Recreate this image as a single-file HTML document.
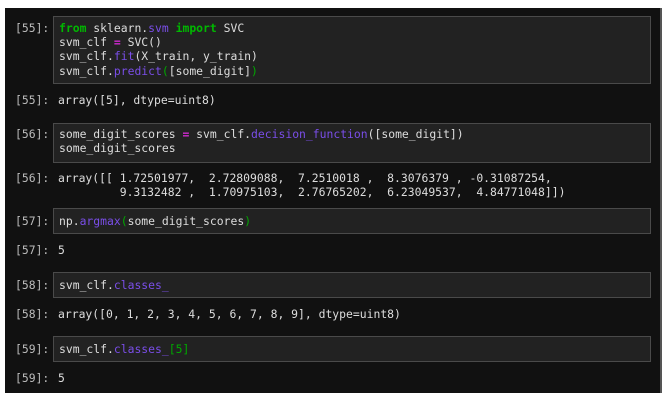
<!DOCTYPE html>
<html><head><meta charset="utf-8"><style>
body{margin:0;width:671px;height:404px;background:#fff;overflow:hidden;position:relative;font-family:"DejaVu Sans Mono","Liberation Mono",monospace;font-size:11.4px;color:#ddd}
#p{position:absolute;left:5px;top:8px;width:655px;height:385px;background:#111;border-right:2px solid #555}
.b{position:absolute;left:53px;width:596px;background:#222;border:1px solid #4a4a4a}
.t{position:absolute;white-space:pre;line-height:14.2px;color:#ddd}
.l{position:absolute;left:15px;white-space:pre;color:#bbb}
.k{color:#00b800;font-weight:bold}.f{color:#7a4ee8}.o{color:#d02ad0;font-weight:bold}.g{color:#00a800}
</style></head><body>
<div id="p"></div>
<div class="b" style="top:16px;height:66px"></div>
<div class="l" style="top:21px">[55]:</div>
<div class="t" style="left:59px;top:21px"><span class="k">from</span> sklearn.<span class="f">svm</span> <span class="k">import</span> SVC
svm_clf <span class="o">=</span> SVC()
svm_clf.<span class="f">fit</span>(X_train, y_train)
svm_clf.<span class="f">predict</span><span class="g">(</span>[some_digit]<span class="g">)</span></div>
<div class="l" style="top:93px">[55]:</div>
<div class="t" style="left:58px;top:93px">array([5], dtype=uint8)</div>
<div class="b" style="top:123px;height:38px"></div>
<div class="l" style="top:127px">[56]:</div>
<div class="t" style="left:59px;top:127px">some_digit_scores <span class="o">=</span> svm_clf.<span class="f">decision_function</span>([some_digit])
some_digit_scores</div>
<div class="l" style="top:171px">[56]:</div>
<div class="t" style="left:58px;top:171px">array([[ 1.72501977,  2.72809088,  7.2510018 ,  8.3076379 , -0.31087254,
         9.3132482 ,  1.70975103,  2.76765202,  6.23049537,  4.84771048]])</div>
<div class="b" style="top:208px;height:24px"></div>
<div class="l" style="top:214px">[57]:</div>
<div class="t" style="left:59px;top:214px">np.<span class="f">argmax</span><span class="g">(</span>some_digit_scores<span class="g">)</span></div>
<div class="l" style="top:243px">[57]:</div>
<div class="t" style="left:58px;top:243px">5</div>
<div class="b" style="top:272px;height:24px"></div>
<div class="l" style="top:278px">[58]:</div>
<div class="t" style="left:59px;top:278px">svm_clf.<span class="f">classes_</span></div>
<div class="l" style="top:307px">[58]:</div>
<div class="t" style="left:58px;top:307px">array([0, 1, 2, 3, 4, 5, 6, 7, 8, 9], dtype=uint8)</div>
<div class="b" style="top:336px;height:24px"></div>
<div class="l" style="top:342px">[59]:</div>
<div class="t" style="left:59px;top:342px">svm_clf.<span class="f">classes_</span><span class="g">[5]</span></div>
<div class="l" style="top:371px">[59]:</div>
<div class="t" style="left:58px;top:371px">5</div>
</body></html>
